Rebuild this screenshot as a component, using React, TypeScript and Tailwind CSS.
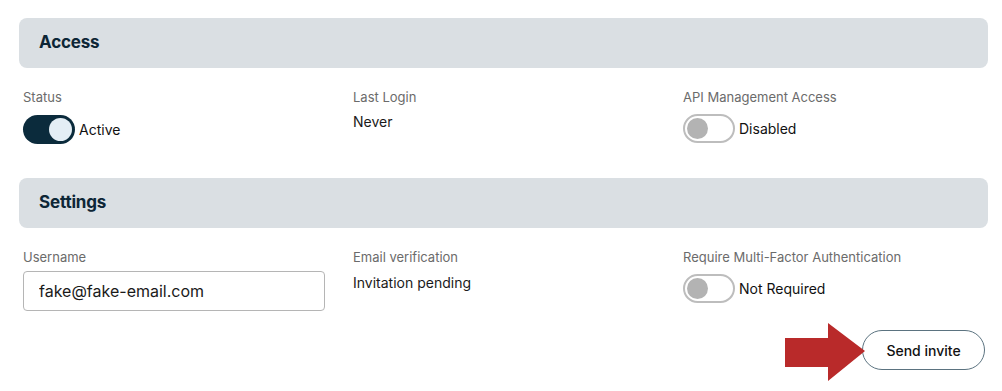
import type React from "react";

const Toggle = ({ on }: { on: boolean }) =>
  on ? (
    <span className="flex h-[29px] w-[52px] shrink-0 items-center justify-end rounded-full bg-[#0b2b3c] px-[3px]">
      <span className="h-[23px] w-[23px] rounded-full bg-[#e4eef5]" />
    </span>
  ) : (
    <span className="flex h-[29px] w-[52px] shrink-0 items-center rounded-full border-2 border-[#bdbdbd] bg-white px-[2px]">
      <span className="h-[21px] w-[21px] rounded-full bg-[#b3b3b3]" />
    </span>
  );

const SectionHeader = ({ title }: { title: string }) => (
  <div className="flex h-[50px] items-center rounded-lg bg-[#dadfe3] px-5">
    <h2 className="text-[17px] font-bold tracking-[-0.01em] text-[#0d2636]">{title}</h2>
  </div>
);

const Label = ({ children }: { children: React.ReactNode }) => (
  <div className="text-[13px] leading-4 text-[#6b6b6b]">{children}</div>
);

export default function App() {
  return (
    <div
      className="relative h-[391px] w-[1002px] overflow-hidden bg-white px-[14px] pt-[18px] pr-[14px]"
      style={{ fontFamily: "Inter, 'Liberation Sans', sans-serif" }}
    >
      <div className="pl-[5px]">
        {/* Access */}
        <SectionHeader title="Access" />
        <div className="mt-[21px] grid grid-cols-[330px_330px_1fr] pl-1">
          <div>
            <Label>Status</Label>
            <div className="mt-[10px] flex items-center gap-1">
              <Toggle on />
              <span className="text-[14px] text-[#111]">Active</span>
            </div>
          </div>
          <div>
            <Label>Last Login</Label>
            <div className="mt-[6px] text-[14px] text-[#1a1a1a]">Never</div>
          </div>
          <div>
            <Label>API Management Access</Label>
            <div className="mt-[9px] flex items-center gap-1">
              <Toggle on={false} />
              <span className="text-[14px] text-[#111]">Disabled</span>
            </div>
          </div>
        </div>

        {/* Settings */}
        <div className="mt-[34px]">
          <SectionHeader title="Settings" />
        </div>
        <div className="mt-[21px] grid grid-cols-[330px_330px_1fr] pl-1">
          <div>
            <Label>Username</Label>
            <input
              readOnly
              value="fake@fake-email.com"
              className="mt-[6px] h-10 w-[302px] rounded border border-[#b5b5b5] px-[15px] text-[16px] text-[#1a1a1a] outline-none"
            />
          </div>
          <div>
            <Label>Email verification</Label>
            <div className="mt-[7px] text-[14px] text-[#1a1a1a]">Invitation pending</div>
          </div>
          <div>
            <Label>Require Multi-Factor Authentication</Label>
            <div className="mt-[9px] flex items-center gap-1">
              <Toggle on={false} />
              <span className="text-[14px] text-[#111]">Not Required</span>
            </div>
          </div>
        </div>

        <div className="mt-[19px] flex justify-end pr-[3px]">
          <button className="h-10 w-[123px] rounded-full border border-[#5b7380] bg-white text-[14px] font-medium text-[#111]">
            Send invite
          </button>
        </div>
      </div>

      {/* annotation arrow */}
      <svg className="absolute left-[785px] top-[323px]" width="82" height="59" viewBox="0 0 82 59">
        <polygon points="0,15 43,15 43,0 80,28 43,58 43,44 0,44" fill="#b92a2a" />
      </svg>
    </div>
  );
}
